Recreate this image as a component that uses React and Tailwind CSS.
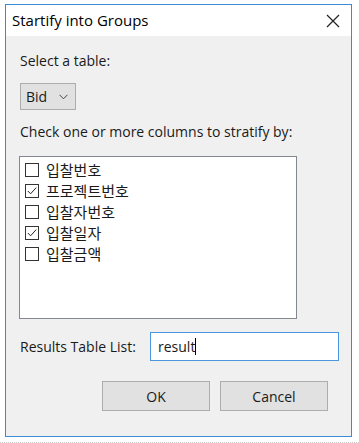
import React, { useState } from 'react';

const columns = [
  { name: '입찰번호', checked: false },
  { name: '프로젝트번호', checked: true },
  { name: '입찰자번호', checked: false },
  { name: '입찰일자', checked: true },
  { name: '입찰금액', checked: false },
];

const font = { fontFamily: '"Open Sans", "Noto Sans CJK KR", sans-serif' };

const CheckBox = ({ checked }) => (
  <div className="w-[14px] h-[14px] border border-[#333] bg-white flex items-center justify-center shrink-0">
    {checked && (
      <svg width="12" height="12" viewBox="0 0 12 12">
        <path d="M1.8 6 L4.6 8.8 L10.2 2.6" fill="none" stroke="#222" strokeWidth="1" />
      </svg>
    )}
  </div>
);

const App = () => {
  const [items, setItems] = useState(columns);

  const toggle = (i) => {
    setItems(items.map((c, idx) => (idx === i ? { ...c, checked: !c.checked } : c)));
  };

  return (
    <div className="w-[359px] h-[443px] bg-white overflow-hidden text-[#1a1a1a]" style={font}>
      <div className="ml-[5px] mt-[4px] w-[347px] h-[433px] border border-[#3a8ad6] flex flex-col">
        {/* title bar */}
        <div className="h-[31px] bg-white flex items-center justify-between pl-[6px] pr-[11px]">
          <span className="text-[15px] text-black">Startify into Groups</span>
          <svg width="14" height="14" viewBox="0 0 14 14">
            <path d="M1 1 L13 13 M13 1 L1 13" stroke="#222" strokeWidth="1.2" />
          </svg>
        </div>

        {/* body */}
        <div className="flex-1 bg-[#f0f0f0] pl-[14px] pr-[12px] pt-[15px] flex flex-col">
          <p className="text-[14px] leading-[20px]">Select a table:</p>

          <div className="mt-[12px] w-[56px] h-[27px] bg-[#e1e1e1] border border-[#adadad] flex items-center justify-between pl-[5px] pr-[7px]">
            <span className="text-[14px]">Bid</span>
            <svg width="9" height="6" viewBox="0 0 9 6">
              <path d="M0.5 0.8 L4.5 4.8 L8.5 0.8" fill="none" stroke="#444" strokeWidth="1" />
            </svg>
          </div>

          <p className="mt-[12px] text-[14px] leading-[20px]">Check one or more columns to stratify by:</p>

          <div className="mt-[14px] -ml-[1px] w-[278px] h-[163px] bg-white border border-[#828790] pt-[2px] pl-[5px]">
            {items.map((c, i) => (
              <div
                key={c.name}
                className="h-[21px] flex items-center gap-[7px] cursor-default"
                onClick={() => toggle(i)}
              >
                <CheckBox checked={c.checked} />
                <span className="text-[15px] leading-[21px]" style={{ fontFamily: '"Noto Sans CJK KR", sans-serif' }}>
                  {c.name}
                </span>
              </div>
            ))}
          </div>

          <div className="mt-[13px] flex items-center">
            <span className="text-[14px] w-[130px]">Results Table List:</span>
            <div className="w-[189px] h-[29px] bg-white border border-[#4a97e0] flex items-center pl-[7px]">
              <span className="text-[14px]">result</span>
              <span className="w-px h-[17px] bg-black"></span>
            </div>
          </div>

          <div className="mt-[20px] flex gap-[10px] pl-[82px]">
            <button className="w-[108px] h-[30px] bg-[#e1e1e1] border border-[#adadad] text-[14px]">OK</button>
            <button className="w-[108px] h-[30px] bg-[#e1e1e1] border border-[#adadad] text-[14px]">Cancel</button>
          </div>
        </div>
      </div>
      <div className="mt-[5px] border-t border-dotted border-[#c8c8c8]"></div>
    </div>
  );
};

export default App;
